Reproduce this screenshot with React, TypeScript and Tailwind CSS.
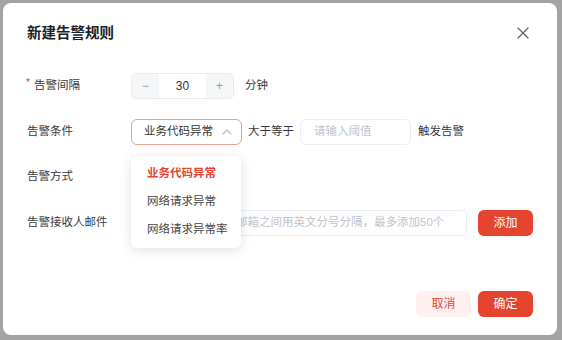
import { useState } from "react";

const conditions = ["业务代码异常", "网络请求异常", "网络请求异常率"];

function CloseIcon() {
  return (
    <svg width="12" height="12" viewBox="0 0 12 12" fill="none">
      <path d="M1 1L11 11M11 1L1 11" stroke="#666" strokeWidth="1.3" strokeLinecap="round" />
    </svg>
  );
}

function ChevronUp() {
  return (
    <svg width="10" height="6" viewBox="0 0 10 6" fill="none">
      <path d="M1 5L5 1L9 5" stroke="#b5b8be" strokeWidth="1.1" strokeLinecap="round" strokeLinejoin="round" />
    </svg>
  );
}

function Row({ label, required, children }: { label: string; required?: boolean; children?: React.ReactNode }) {
  return (
    <div className="flex h-[26px] items-center">
      <div className="relative w-[104px] text-[11.5px] text-[#3a3a3a]">
        {required && <span className="absolute -left-[1px] top-[-2px] text-[10px] text-[#e5442f]">*</span>}
        <span className={required ? "pl-[7px]" : ""}>{label}</span>
      </div>
      {children}
    </div>
  );
}

export default function App() {
  const [interval, setInterval] = useState(30);
  const [selected] = useState(0);

  return (
    <div
      className="h-[340px] w-[562px] bg-[#a3a3a3] pb-[5px] pl-[3px] pr-[5px] pt-[3px]"
      style={{ fontFamily: '"Liberation Sans", "Noto Sans CJK SC", sans-serif' }}
    >
      <div className="relative flex h-full flex-col rounded-lg bg-white px-6 pb-[18px] pt-[19px]">
        <div className="flex items-center justify-between">
          <h2 className="text-[14.5px] font-bold leading-[22px] text-[#1d2129]">新建告警规则</h2>
          <button className="mr-[2px] flex h-4 w-4 items-center justify-center">
            <CloseIcon />
          </button>
        </div>

        <div className="mt-[29px] flex flex-col gap-[19.5px]">
          <Row label="告警间隔" required>
            <div className="flex h-[26px] w-[103px] overflow-hidden rounded-[5px] border border-[#e8eaee] text-[12px]">
              <button
                className="flex w-[27px] items-center justify-center bg-[#f5f6f8] text-[#999]"
                onClick={() => setInterval(interval - 1)}
              >
                −
              </button>
              <div className="flex flex-1 items-center justify-center text-[#333]">{interval}</div>
              <button
                className="flex w-[27px] items-center justify-center bg-[#f5f6f8] text-[#999]"
                onClick={() => setInterval(interval + 1)}
              >
                +
              </button>
            </div>
            <span className="ml-[11px] text-[11.5px] text-[#3a3a3a]">分钟</span>
          </Row>

          <Row label="告警条件">
            <div className="relative">
              <div className="flex h-[26px] w-[111px] items-center justify-between rounded-[6px] border border-[#ec9f92] pl-[12px] pr-[9px] text-[11.5px] text-[#333]">
                <span>{conditions[selected]}</span>
                <ChevronUp />
              </div>
              <div className="absolute left-0 top-[37px] z-10 w-[110px] rounded-[6px] bg-white py-[4px] shadow-[0_2px_12px_rgba(0,0,0,0.13)]">
                {conditions.map((c, i) => (
                  <div
                    key={c}
                    className={
                      i === selected
                        ? "flex h-[28px] items-center pl-[16px] text-[11.5px] font-semibold text-[#e5442f]"
                        : "flex h-[28px] items-center pl-[16px] text-[11.5px] text-[#444]"
                    }
                  >
                    {c}
                  </div>
                ))}
              </div>
            </div>
            <span className="ml-[6px] text-[11.5px] text-[#3a3a3a]">大于等于</span>
            <div className="ml-[6px] flex h-[26px] w-[111px] items-center rounded-[6px] border border-[#eceef1] pl-[13px] text-[11.5px] text-[#c0c4cc]">
              请输入阈值
            </div>
            <span className="ml-[7px] text-[11.5px] text-[#3a3a3a]">触发告警</span>
          </Row>

          <Row label="告警方式" />

          <Row label="告警接收人邮件">
            <div className="flex h-[26px] w-[336px] items-center overflow-hidden whitespace-nowrap rounded-[6px] border border-[#eceef1] pl-[12px] text-[11.5px] text-[#c0c4cc]">
              请输入邮箱，多个邮箱之间用英文分号分隔，最多添加50个
            </div>
            <button className="ml-[11px] h-[26px] w-[55px] rounded-[6px] bg-[#e5442f] text-[12px] text-white">添加</button>
          </Row>
        </div>

        <div className="mt-auto flex justify-end gap-[7px]">
          <button className="h-[26px] w-[55px] rounded-[6px] bg-[#fdf0ee] text-[12px] text-[#e5442f]">取消</button>
          <button className="h-[26px] w-[55px] rounded-[6px] bg-[#e5442f] text-[12px] text-white">确定</button>
        </div>
      </div>
    </div>
  );
}
